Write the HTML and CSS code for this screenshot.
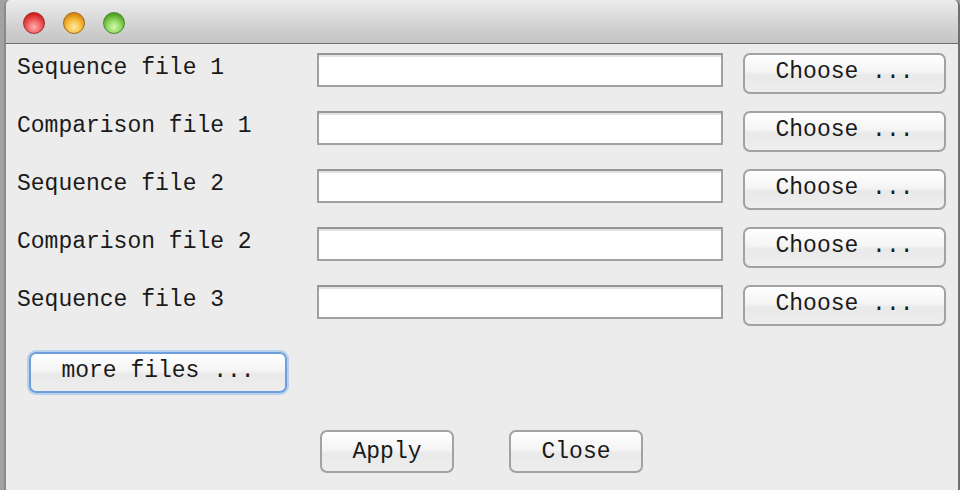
FILE: index.html
```html
<!DOCTYPE html>
<html>
<head>
<meta charset="utf-8">
<link rel="stylesheet" href="styles.css">
</head>
<body>
<div class="window">
  <div class="titlebar">
    <span class="light red"></span>
    <span class="light yellow"></span>
    <span class="light green"></span>
  </div>
  <div class="content">
    <div class="rows">
      <div class="row"><span class="label">Sequence file 1</span><input class="field" type="text"><button class="btn choose">Choose ...</button></div>
      <div class="row"><span class="label">Comparison file 1</span><input class="field" type="text"><button class="btn choose">Choose ...</button></div>
      <div class="row"><span class="label">Sequence file 2</span><input class="field" type="text"><button class="btn choose">Choose ...</button></div>
      <div class="row"><span class="label">Comparison file 2</span><input class="field" type="text"><button class="btn choose">Choose ...</button></div>
      <div class="row"><span class="label">Sequence file 3</span><input class="field" type="text"><button class="btn choose">Choose ...</button></div>
    </div>
    <div class="more-wrap"><button class="btn more">more files ...</button></div>
    <div class="actions">
      <button class="btn action">Apply</button>
      <button class="btn action">Close</button>
    </div>
  </div>
</div>
</body>
</html>
```
FILE: styles.css
```css
html, body {
  margin: 0;
  padding: 0;
  width: 960px;
  height: 490px;
  overflow: hidden;
  background: #a2a2a6;
}
.window {
  margin-left: 4px;
  width: 952px;
  height: 490px;
  border-left: 2px solid #8a8a8e;
  border-right: 2px solid #707070;
  border-radius: 6px 6px 0 0;
  background: #ececec;
  overflow: hidden;
  font-family: "Liberation Mono", "Courier New", monospace;
  color: #1a1a1a;
}
.titlebar {
  height: 43px;
  border-bottom: 1px solid #6e6e6e;
  background: linear-gradient(#ececec, #d2d2d2 60%, #c4c4c4);
  display: flex;
  align-items: center;
  padding-left: 17px;
  gap: 18px;
}
.light {
  width: 22px;
  height: 22px;
  border-radius: 50%;
  box-sizing: border-box;
  margin-top: 3px;
}
.red {
  background: radial-gradient(circle at 50% 70%, #ffb0b0 0%, #f06060 40%, #d42020 75%);
  border: 1px solid #a03030;
}
.yellow {
  background: radial-gradient(circle at 50% 70%, #ffe8a0 0%, #f8c040 40%, #d98a10 75%);
  border: 1px solid #a06a20;
}
.green {
  background: radial-gradient(circle at 50% 70%, #d8f8b0 0%, #90d860 40%, #50a020 75%);
  border: 1px solid #4a8a30;
}
.content {
  padding: 9px 0 0 11px;
}
.rows {
  display: flex;
  flex-direction: column;
  gap: 18px;
}
.row {
  display: flex;
  align-items: flex-start;
  height: 40px;
}
.label {
  width: 300px;
  font-size: 23px;
  line-height: 26px;
  padding-top: 2px;
}
.field {
  width: 406px;
  height: 34px;
  box-sizing: border-box;
  margin: 0 20px 0 0;
  border: 2px solid #a0a0a0;
  border-top-color: #969696;
  box-shadow: inset 0 2px 0 #e2e2e2;
  background: #fff;
  padding: 0;
}
.btn {
  font-family: "Liberation Mono", "Courier New", monospace;
  font-size: 23px;
  color: #1a1a1a;
  box-sizing: border-box;
  border: 2px solid #a2a2a2;
  border-radius: 7px;
  background: linear-gradient(#ffffff, #f4f4f4 45%, #e9e9e9 55%, #eeeeee);
  padding: 0;
  line-height: 30px;
}
.choose {
  width: 203px;
  height: 41px;
  padding-bottom: 4px;
}
.more-wrap {
  padding: 27px 0 0 12px;
}
.more {
  width: 258px;
  height: 41px;
  border-color: #6d9fdc;
  box-shadow: 0 0 0 2px rgba(140, 185, 235, 0.55);
  padding-bottom: 4px;
}
.actions {
  display: flex;
  gap: 55px;
  padding: 37px 0 0 303px;
}
.action {
  width: 134px;
  height: 43px;
}
```
